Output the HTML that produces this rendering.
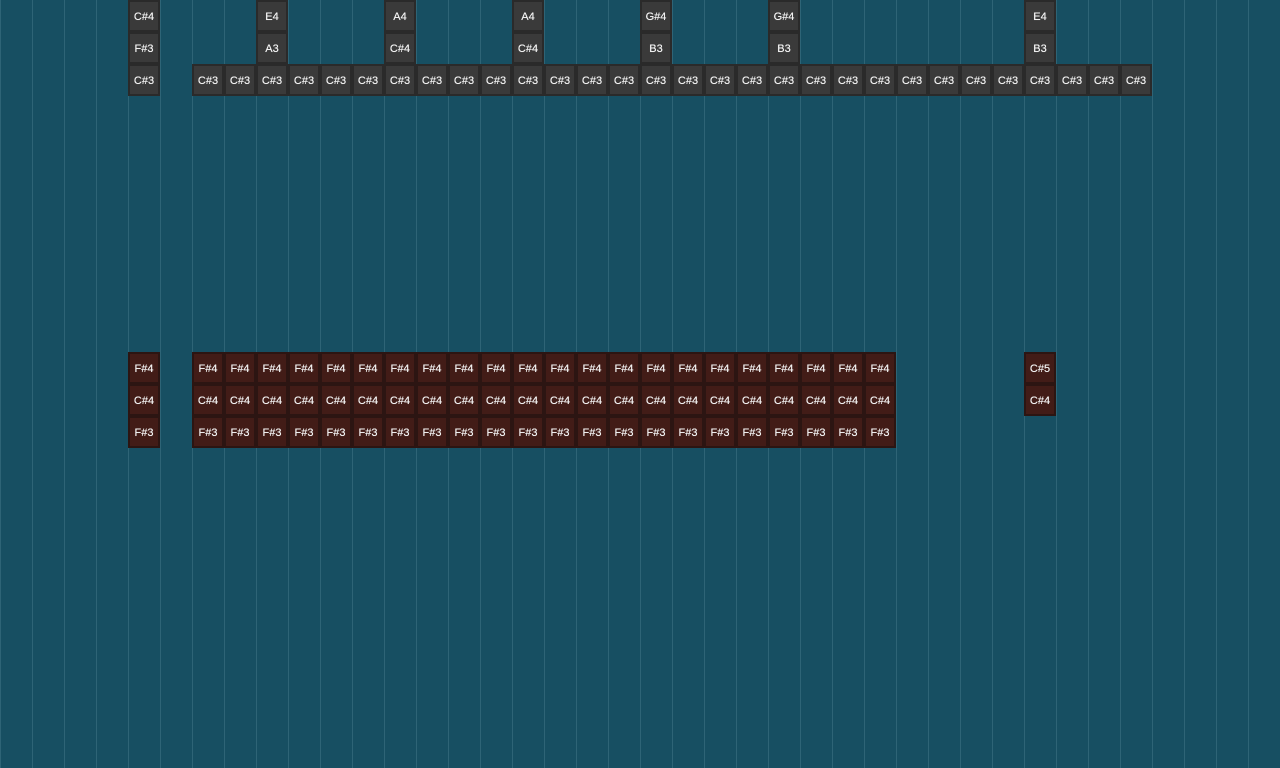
<!DOCTYPE html>
<html><head><meta charset="utf-8"><style>
html,body{margin:0;padding:0}
body{width:1280px;height:768px;overflow:hidden;position:relative;background-color:#174f62;
background-image:linear-gradient(to right,#2e6476 0,#2e6476 1px,transparent 1px);background-size:32px 32px;}
.c{position:absolute;width:32px;height:32px;box-sizing:border-box;border:2px solid #2a2a2a;background:#3a3a3a;color:#f2f2f2;font:11px "Liberation Sans",sans-serif;line-height:31px;text-align:center;text-shadow:0 0 0.4px #fff}
.r{border-color:#2c1512;background:#421c17}
</style></head><body>
<div class="c" style="left:128px;top:0">C#4</div><div class="c" style="left:128px;top:32px">F#3</div>
<div class="c" style="left:256px;top:0">E4</div><div class="c" style="left:256px;top:32px">A3</div>
<div class="c" style="left:384px;top:0">A4</div><div class="c" style="left:384px;top:32px">C#4</div>
<div class="c" style="left:512px;top:0">A4</div><div class="c" style="left:512px;top:32px">C#4</div>
<div class="c" style="left:640px;top:0">G#4</div><div class="c" style="left:640px;top:32px">B3</div>
<div class="c" style="left:768px;top:0">G#4</div><div class="c" style="left:768px;top:32px">B3</div>
<div class="c" style="left:1024px;top:0">E4</div><div class="c" style="left:1024px;top:32px">B3</div>
<div class="c" style="left:128px;top:64px">C#3</div>
<div class="c" style="left:192px;top:64px">C#3</div><div class="c" style="left:224px;top:64px">C#3</div><div class="c" style="left:256px;top:64px">C#3</div><div class="c" style="left:288px;top:64px">C#3</div><div class="c" style="left:320px;top:64px">C#3</div><div class="c" style="left:352px;top:64px">C#3</div><div class="c" style="left:384px;top:64px">C#3</div><div class="c" style="left:416px;top:64px">C#3</div><div class="c" style="left:448px;top:64px">C#3</div><div class="c" style="left:480px;top:64px">C#3</div><div class="c" style="left:512px;top:64px">C#3</div><div class="c" style="left:544px;top:64px">C#3</div><div class="c" style="left:576px;top:64px">C#3</div><div class="c" style="left:608px;top:64px">C#3</div><div class="c" style="left:640px;top:64px">C#3</div><div class="c" style="left:672px;top:64px">C#3</div><div class="c" style="left:704px;top:64px">C#3</div><div class="c" style="left:736px;top:64px">C#3</div><div class="c" style="left:768px;top:64px">C#3</div><div class="c" style="left:800px;top:64px">C#3</div><div class="c" style="left:832px;top:64px">C#3</div><div class="c" style="left:864px;top:64px">C#3</div><div class="c" style="left:896px;top:64px">C#3</div><div class="c" style="left:928px;top:64px">C#3</div><div class="c" style="left:960px;top:64px">C#3</div><div class="c" style="left:992px;top:64px">C#3</div><div class="c" style="left:1024px;top:64px">C#3</div><div class="c" style="left:1056px;top:64px">C#3</div><div class="c" style="left:1088px;top:64px">C#3</div><div class="c" style="left:1120px;top:64px">C#3</div>

<div class="c r" style="left:128px;top:352px">F#4</div><div class="c r" style="left:128px;top:384px">C#4</div><div class="c r" style="left:128px;top:416px">F#3</div>
<div class="c r" style="left:1024px;top:352px">C#5</div><div class="c r" style="left:1024px;top:384px">C#4</div>

<div class="c r" style="left:192px;top:352px">F#4</div><div class="c r" style="left:224px;top:352px">F#4</div><div class="c r" style="left:256px;top:352px">F#4</div><div class="c r" style="left:288px;top:352px">F#4</div><div class="c r" style="left:320px;top:352px">F#4</div><div class="c r" style="left:352px;top:352px">F#4</div><div class="c r" style="left:384px;top:352px">F#4</div><div class="c r" style="left:416px;top:352px">F#4</div><div class="c r" style="left:448px;top:352px">F#4</div><div class="c r" style="left:480px;top:352px">F#4</div><div class="c r" style="left:512px;top:352px">F#4</div><div class="c r" style="left:544px;top:352px">F#4</div><div class="c r" style="left:576px;top:352px">F#4</div><div class="c r" style="left:608px;top:352px">F#4</div><div class="c r" style="left:640px;top:352px">F#4</div><div class="c r" style="left:672px;top:352px">F#4</div><div class="c r" style="left:704px;top:352px">F#4</div><div class="c r" style="left:736px;top:352px">F#4</div><div class="c r" style="left:768px;top:352px">F#4</div><div class="c r" style="left:800px;top:352px">F#4</div><div class="c r" style="left:832px;top:352px">F#4</div><div class="c r" style="left:864px;top:352px">F#4</div>

<div class="c r" style="left:192px;top:384px">C#4</div><div class="c r" style="left:224px;top:384px">C#4</div><div class="c r" style="left:256px;top:384px">C#4</div><div class="c r" style="left:288px;top:384px">C#4</div><div class="c r" style="left:320px;top:384px">C#4</div><div class="c r" style="left:352px;top:384px">C#4</div><div class="c r" style="left:384px;top:384px">C#4</div><div class="c r" style="left:416px;top:384px">C#4</div><div class="c r" style="left:448px;top:384px">C#4</div><div class="c r" style="left:480px;top:384px">C#4</div><div class="c r" style="left:512px;top:384px">C#4</div><div class="c r" style="left:544px;top:384px">C#4</div><div class="c r" style="left:576px;top:384px">C#4</div><div class="c r" style="left:608px;top:384px">C#4</div><div class="c r" style="left:640px;top:384px">C#4</div><div class="c r" style="left:672px;top:384px">C#4</div><div class="c r" style="left:704px;top:384px">C#4</div><div class="c r" style="left:736px;top:384px">C#4</div><div class="c r" style="left:768px;top:384px">C#4</div><div class="c r" style="left:800px;top:384px">C#4</div><div class="c r" style="left:832px;top:384px">C#4</div><div class="c r" style="left:864px;top:384px">C#4</div>

<div class="c r" style="left:192px;top:416px">F#3</div><div class="c r" style="left:224px;top:416px">F#3</div><div class="c r" style="left:256px;top:416px">F#3</div><div class="c r" style="left:288px;top:416px">F#3</div><div class="c r" style="left:320px;top:416px">F#3</div><div class="c r" style="left:352px;top:416px">F#3</div><div class="c r" style="left:384px;top:416px">F#3</div><div class="c r" style="left:416px;top:416px">F#3</div><div class="c r" style="left:448px;top:416px">F#3</div><div class="c r" style="left:480px;top:416px">F#3</div><div class="c r" style="left:512px;top:416px">F#3</div><div class="c r" style="left:544px;top:416px">F#3</div><div class="c r" style="left:576px;top:416px">F#3</div><div class="c r" style="left:608px;top:416px">F#3</div><div class="c r" style="left:640px;top:416px">F#3</div><div class="c r" style="left:672px;top:416px">F#3</div><div class="c r" style="left:704px;top:416px">F#3</div><div class="c r" style="left:736px;top:416px">F#3</div><div class="c r" style="left:768px;top:416px">F#3</div><div class="c r" style="left:800px;top:416px">F#3</div><div class="c r" style="left:832px;top:416px">F#3</div><div class="c r" style="left:864px;top:416px">F#3</div>
</body></html>
